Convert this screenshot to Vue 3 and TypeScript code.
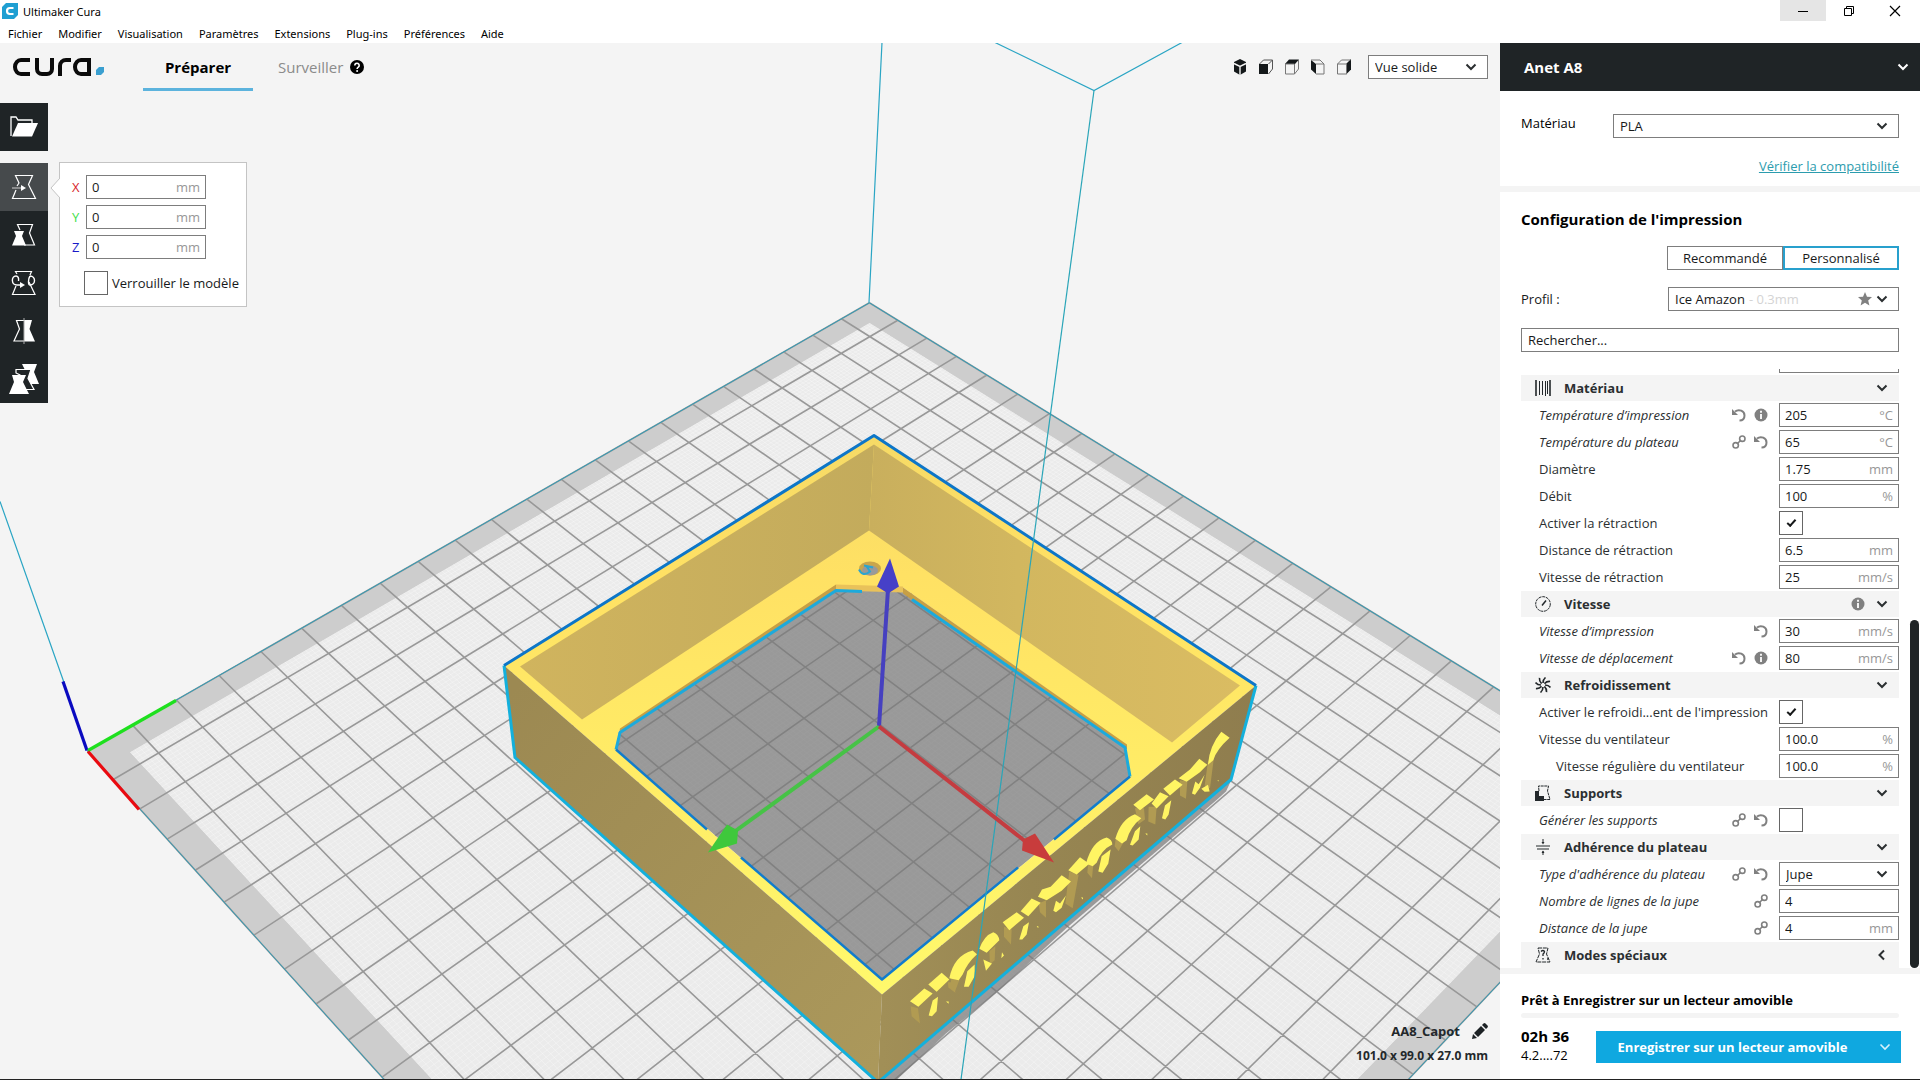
<script setup lang="ts">
import { ref } from 'vue'

type IconName = 'link' | 'undo' | 'info'

interface Row {
  kind: 'header' | 'field' | 'check' | 'select' | 'cut'
  label: string
  icon?: string
  value?: string
  unit?: string
  checked?: boolean
  italic?: boolean
  nested?: boolean
  closed?: boolean
  marks?: IconName[]
}

const menus = ['Fichier', 'Modifier', 'Visualisation', 'Paramètres', 'Extensions', 'Plug-ins', 'Préférences', 'Aide']

const rows = ref<Row[]>([
  { kind: 'cut', label: '' },
  { kind: 'header', label: 'Matériau', icon: 'material' },
  { kind: 'field', label: 'Température d’impression', value: '205', unit: '°C', italic: true, marks: ['undo', 'info'] },
  { kind: 'field', label: 'Température du plateau', value: '65', unit: '°C', italic: true, marks: ['link', 'undo'] },
  { kind: 'field', label: 'Diamètre', value: '1.75', unit: 'mm' },
  { kind: 'field', label: 'Débit', value: '100', unit: '%' },
  { kind: 'check', label: 'Activer la rétraction', checked: true },
  { kind: 'field', label: 'Distance de rétraction', value: '6.5', unit: 'mm' },
  { kind: 'field', label: 'Vitesse de rétraction', value: '25', unit: 'mm/s' },
  { kind: 'header', label: 'Vitesse', icon: 'speed', marks: ['info'] },
  { kind: 'field', label: 'Vitesse d’impression', value: '30', unit: 'mm/s', italic: true, marks: ['undo'] },
  { kind: 'field', label: 'Vitesse de déplacement', value: '80', unit: 'mm/s', italic: true, marks: ['undo', 'info'] },
  { kind: 'header', label: 'Refroidissement', icon: 'fan' },
  { kind: 'check', label: "Activer le refroidi...ent de l'impression", checked: true },
  { kind: 'field', label: 'Vitesse du ventilateur', value: '100.0', unit: '%' },
  { kind: 'field', label: 'Vitesse régulière du ventilateur', value: '100.0', unit: '%', nested: true },
  { kind: 'header', label: 'Supports', icon: 'support' },
  { kind: 'check', label: 'Générer les supports', checked: false, italic: true, marks: ['link', 'undo'] },
  { kind: 'header', label: 'Adhérence du plateau', icon: 'adhesion' },
  { kind: 'select', label: "Type d'adhérence du plateau", value: 'Jupe', italic: true, marks: ['link', 'undo'] },
  { kind: 'field', label: 'Nombre de lignes de la jupe', value: '4', unit: '', italic: true, marks: ['link'] },
  { kind: 'field', label: 'Distance de la jupe', value: '4', unit: 'mm', italic: true, marks: ['link'] },
  { kind: 'header', label: 'Modes spéciaux', icon: 'special', closed: true },
])

const axes = ref([
  { name: 'X', color: '#d8262c', value: '0' },
  { name: 'Y', color: '#3fe04a', value: '0' },
  { name: 'Z', color: '#1a1ac8', value: '0' },
])
const locked = ref(false)
const search = ref('')

/* Projects a point of the build plate (centimetres, 22 x 22) to the view. */
function project(a: number, b: number): string {
  const w = 1 + 0.01283 * a - 0.0135 * b
  const x = (87.5 + 46.695 * a + 24.3 * b) / w
  const y = (751.4 - 16.477 * a + 18.08 * b) / w
  return `${x.toFixed(1)} ${y.toFixed(1)}`
}

function gridPath(step: number): string {
  let d = ''
  for (let i = 0; i <= 22 / step; i++) {
    const t = i * step
    d += `M${project(t, 0)}L${project(t, 22)}M${project(0, t)}L${project(22, t)}`
  }
  return d
}

function squarePath(inset: number): string {
  const lo = inset
  const hi = 22 - inset
  return `M${project(lo, lo)}L${project(hi, lo)}L${project(hi, hi)}L${project(lo, hi)}Z`
}

const plate = squarePath(0)
const area = squarePath(0.6)
const grid = gridPath(1)
const fineGrid = gridPath(0.1)
</script>

<template>
  <div class="app">
    <header class="titlebar">
      <svg class="app-icon" width="16" height="16" viewBox="0 0 16 16">
        <path d="M4 0h12v12l-4 4H0V4z" fill="#1f9fd2" />
        <path d="M11.500 5H8a3 3 0 0 0 0 6h3.500" fill="none" stroke="#fff" stroke-width="2.200" />
      </svg>
      <span class="app-name">Ultimaker Cura</span>
      <div class="window-buttons">
        <button class="wb active" aria-label="Réduire">
          <svg width="12" height="12" viewBox="0 0 12 12"><path d="M1 6.500h10" stroke="#000" /></svg>
        </button>
        <button class="wb" aria-label="Restaurer">
          <svg width="12" height="12" viewBox="0 0 12 12"><path d="M1.500 3.500h7v7h-7zM3.500 3.500v-2h7v7h-2" fill="none" stroke="#000" /></svg>
        </button>
        <button class="wb" aria-label="Fermer">
          <svg width="12" height="12" viewBox="0 0 12 12"><path d="M1 1l10 10M11 1L1 11" stroke="#000" stroke-width="1.200" /></svg>
        </button>
      </div>
    </header>
    <nav class="menubar">
      <button v-for="m in menus" :key="m">{{ m }}</button>
    </nav>

    <div class="body">
      <main class="stage">
        <svg class="scene" viewBox="0 43 1500 1037" preserveAspectRatio="xMidYMid slice">
          <defs>
            <linearGradient id="rim" x1="0" y1="436" x2="0" y2="995" gradientUnits="userSpaceOnUse">
              <stop offset="0" stop-color="#f6da66" /><stop offset=".25" stop-color="#ffe164" />
              <stop offset=".6" stop-color="#ffec66" /><stop offset="1" stop-color="#fff96c" />
            </linearGradient>
            <linearGradient id="wallL" x1="520" y1="0" x2="874" y2="0" gradientUnits="userSpaceOnUse">
              <stop offset="0" stop-color="#d0b45e" /><stop offset="1" stop-color="#c3ab5c" />
            </linearGradient>
            <linearGradient id="wallR" x1="870" y1="0" x2="1240" y2="0" gradientUnits="userSpaceOnUse">
              <stop offset="0" stop-color="#c9af5d" /><stop offset=".4" stop-color="#d2b75f" /><stop offset="1" stop-color="#dabc62" />
            </linearGradient>
            <linearGradient id="outL" x1="504" y1="700" x2="882" y2="1060" gradientUnits="userSpaceOnUse">
              <stop offset="0" stop-color="#9c8952" /><stop offset="1" stop-color="#ab985b" />
            </linearGradient>
            <linearGradient id="outR" x1="882" y1="0" x2="1256" y2="0" gradientUnits="userSpaceOnUse">
              <stop offset="0" stop-color="#a18f57" /><stop offset=".4" stop-color="#978652" /><stop offset="1" stop-color="#8f7d4e" />
            </linearGradient>
            <clipPath id="printable"><path :d="area" /></clipPath>
          </defs>

          <path :d="plate" fill="#cdcdcd" />
          <path :d="area" fill="#ebebeb" />
          <path :d="fineGrid" fill="none" stroke="#fff" stroke-width="1" opacity=".3" clip-path="url(#printable)" />
          <path :d="grid" fill="none" stroke="#989898" stroke-width="1.600" />
          <path :d="plate" fill="none" stroke="#2f9db8" stroke-width="1" />

          <g fill="#787878" fill-opacity=".71">
            <path d="M616 750L620 732L836 590L902 591L1125 748L1130 777L882 981Z" />
            <path d="M1232 779L1226 792L1216 801L1066 929L1000 990L946 1034L897 1080H878Z" />
          </g>

          <g fill="none" stroke="#2aa5c4" stroke-width="1.200">
            <path d="M882 43L869 303M995 43L1094 91L1182 43M0 502L64 683" />
          </g>
          <g fill="none" stroke-width="3.200">
            <path d="M63 682L87 751" stroke="#0a0ac0" />
            <path d="M88 751L176 701" stroke="#1ee01e" />
            <path d="M88 752L139 810" stroke="#ea0a10" />
          </g>

          <path fill-rule="evenodd" fill="url(#rim)" d="M874 436L504 666L882 995L1256 686ZM616 750L619 731L836 587L903 588L1126 745L1130 777L882 981Z" />
          <path d="M874 445L520 667L582 720L869 531Z" fill="url(#wallL)" />
          <path d="M874 445L1240 686L1172 743L869 531Z" fill="url(#wallR)" />
          <path d="M619 733L620 729L836 585L838 590L620 734ZM903 588L1127 745V750L903 594Z" fill="#c79f45" />
          <path d="M836 585L903 587V593L836 591Z" fill="#e9c25a" />
          <path d="M504 666L882 995L878 1083L515 758Z" fill="url(#outL)" />
          <path d="M882 995L1256 686L1231 780L878 1083Z" fill="url(#outR)" />

          <ellipse cx="870" cy="569" rx="11" ry="7" fill="#c9a64c" />
          <ellipse cx="870" cy="571" rx="8" ry="5" fill="#999" />
          <path d="M859 570Q863 578 870 572L866 566M864 566l9 2" fill="none" stroke="#2aa5d0" stroke-width="2" />

          <g fill="none" stroke-linejoin="round">
            <path d="M504 666L515 758L878 1083L1231 780L1256 686" stroke="#14b0dc" stroke-width="3" />
            <path d="M504 666L874 436L1256 686" stroke="#0d76c8" stroke-width="3" />
            <path d="M616 750L620 733L836 591L862 592M912 600L1125 748L1130 777" stroke="#1caadc" stroke-width="3" />
            <path d="M616 750L707 830M741 858L882 980L1018 868M1054 840L1130 777" stroke="#127ccc" stroke-width="2.500" />
          </g>

          <g transform="translate(880 700) scale(.3333)">
            <g fill="#b19b52">
              <path d="M92 920L114 926L120 972L95 950ZM204 848L222 848L226 880L205 864ZM214 832L240 836L225 876L212 862ZM328 755L346 740L344 782L330 795ZM372 682L395 690L393 735L372 712ZM476 612L498 602V655L480 638ZM568 516L596 526L578 626L556 612ZM625 490L640 496L636 536L622 520ZM708 412L732 425L716 455L704 440ZM765 326L792 326L795 360L775 374ZM806 322L830 322L826 375L805 366ZM900 242L922 246L918 298L900 288ZM984 186L1004 158L990 266L974 258Z" />
            </g>
            <g fill="#fff563">
              <path d="M90 905L133 867L158 882L115 922ZM146 948L158 903L174 892L170 935L156 950Z" />
              <path d="M145 855L185 820L208 840L170 877Z" />
              <path d="M208 836Q222 768 278 753L291 764Q262 790 248 825L236 842ZM252 862L262 815L284 795L284 830L266 862Z" />
              <path d="M298 748Q312 708 340 698Q356 704 358 722L320 760ZM310 780L336 792L318 814Z" />
              <path d="M368 668L410 638L432 655L388 692ZM418 720L430 680L447 668L440 705L427 720Z" />
              <path d="M422 635L455 597L482 610L445 650Z" />
              <path d="M474 592L486 570L512 562L545 527L573 546L545 574L500 602ZM520 634L528 604L540 612L558 588L545 625L528 638Z" />
              <path d="M565 512L600 473L628 493L590 525Z" />
              <path d="M618 492Q636 425 680 414Q697 420 697 435Q665 450 650 490L638 500ZM655 516L665 470L692 450L685 492L668 520Z" />
              <path d="M706 418Q722 360 765 344L784 356Q752 380 740 422L726 432ZM750 436L765 395L781 380L776 420L758 438Z" />
              <path d="M760 316L800 284L822 300L780 332ZM815 312L840 278L866 290L830 327ZM846 356L855 318L874 302L866 345L856 360Z" />
              <path d="M850 268L885 240L908 256L870 288Z" />
              <path d="M896 236L930 210L958 178L982 196L960 218L920 247ZM936 282L946 246L956 254L974 226L960 265L945 286Z" />
              <path d="M1024 97L1049 115Q1010 150 1000 182L984 196Q988 140 1024 97ZM964 268L984 256L989 276L974 277Z" />
              <path d="M366 758l6 10-8 8zM198 906h8v7zM470 680h5v6zM603 594h6v6zM796 402h6v6zM1012 242h4v4z" />
            </g>
          </g>

          <path d="M1094 91L961 1080" fill="none" stroke="#2aa5b8" stroke-width="1.200" />

          <g fill="none" stroke-width="4">
            <path d="M879 727L888 590" stroke="#4640c0" />
            <path d="M879 727L732 834" stroke="#46c346" />
            <path d="M879 727L1028 844" stroke="#c43c40" />
          </g>
          <path d="M890 559L899 587L888 594L877 587Z" fill="#4640c8" />
          <path d="M708 853L727 825L738 831L737 844Z" fill="#3fc83c" />
          <path d="M1054 863L1035 834L1023 840L1022 851Z" fill="#c83c3c" />
        </svg>

        <div class="stage-top">
          <svg class="logo" width="80" height="20" viewBox="0 0 80 20" fill="none" stroke="#0b0b0b" stroke-width="4" role="img" aria-label="cura.">
            <path d="M18 3H9a6 7 0 0 0 0 14H18M25 1V12a5 5 0 0 0 5 5H35a5 5 0 0 0 5-5V1M48 19V9a6 6 0 0 1 6-6H59M77 19V3H69a6 7 0 0 0 0 14H77" />
          </svg>
          <svg class="logo-dot" width="8" height="8" viewBox="0 0 8 8"><path d="M3 0h5v5l-3 3H0V3z" fill="#3a9fd0" /></svg>
          <nav class="tabs">
            <button class="tab current">Préparer</button>
            <button class="tab">Surveiller
              <svg width="14" height="14" viewBox="0 0 14 14"><circle cx="7" cy="7" r="7" fill="#000" /><path d="M4.800 5.400a2.200 2.200 0 1 1 3.500 1.800c-.8.600-1.200.9-1.200 1.800" fill="none" stroke="#fff" stroke-width="1.600" /><circle cx="7.100" cy="10.900" r="1" fill="#fff" /></svg>
            </button>
          </nav>
          <div class="views">
            <button aria-label="Vue 3D">
              <svg width="16" height="16" viewBox="0 0 16 16"><path d="M8 0l6 3v9.500L8 16l-6-3.500V3z" fill="#14181a" /><path d="M2 4.500l6 3 6-3M8 7.500V16" stroke="#f4f4f4" stroke-width="1.400" fill="none" /></svg>
            </button>
            <button aria-label="Vue de face">
              <svg width="16" height="16" viewBox="0 0 16 16"><path d="M1 5h9v10H1z" fill="#14181a" /><path d="M1.500 5l4-4h9l-4 4M14.500 1v9l-4 5" stroke="#555" fill="none" /></svg>
            </button>
            <button aria-label="Vue du dessus">
              <svg width="16" height="16" viewBox="0 0 16 16"><path d="M1 5l4-4.500h10L11 5z" fill="#14181a" /><path d="M1.500 5h9v10h-9zM14.500 1v9l-4 5" stroke="#777" fill="none" /></svg>
            </button>
            <button aria-label="Vue de gauche">
              <svg width="16" height="16" viewBox="0 0 16 16"><path d="M1 1l5 4v10l-5-4.500z" fill="#14181a" /><path d="M1 1h9l4 4v10H6M6 5h8" stroke="#777" fill="none" /></svg>
            </button>
            <button aria-label="Vue de droite">
              <svg width="16" height="16" viewBox="0 0 16 16"><path d="M15 0l-5 5v10.500l5-5z" fill="#14181a" /><path d="M1.500 5h9v10h-9zM1.500 5l4-4h9" stroke="#777" fill="none" /></svg>
            </button>
          </div>
          <div class="select">
            <select aria-label="Mode d’affichage"><option>Vue solide</option></select>
            <svg width="12" height="8" viewBox="0 0 12 8"><path d="M1.500 1.500L6 6l4.500-4.500" /></svg>
          </div>
        </div>

        <div class="tools-area">
          <div class="toolbar">
            <button class="tool open" aria-label="Ouvrir">
              <svg width="28" height="22" viewBox="0 0 28 22"><path d="M1 20V1h5l2 3h14v3" fill="none" stroke="#fff" stroke-width="1.300" /><path d="M8 7h20l-6 13.500H2z" fill="#fff" /></svg>
            </button>
            <button class="tool selected" aria-label="Déplacer">
              <svg width="28" height="28" viewBox="0 0 28 28"><path d="M3 15M7 13L9 10L5.500 2.500h17l-4 9 7 14H2.500L6 17" fill="none" stroke="#fff" stroke-width="1.200" /><path d="M2 15h9" stroke="#bbb" stroke-width="1.200" /><path d="M11 12l5 3-5 3z" fill="#fff" /></svg>
            </button>
            <button class="tool" aria-label="Mettre à l’échelle">
              <svg width="28" height="28" viewBox="0 0 28 28"><path d="M10 9L7.500 3.500h15l-3 8.500 5 12H14" fill="none" stroke="#fff" stroke-width="1.200" /><path d="M4 10h10l-2 5 4 9.500H2l4-9.500z" fill="#fff" /></svg>
            </button>
            <button class="tool" aria-label="Tourner">
              <svg width="28" height="28" viewBox="0 0 28 28"><path d="M7 5L5.500 2.500h16L20 6M19 13l6 12.500H2.500L6 17" fill="none" stroke="#fff" stroke-width="1.200" /><path d="M8.500 12C9 9 8 7 6 7c-5 0-5 9 1 9l4 0M20 7c6 0 6 9 0 9-2 0-2-6 0-9" fill="none" stroke="#fff" stroke-width="1.400" /><path d="M10 13l5 3-5 3z" fill="#fff" /></svg>
            </button>
            <button class="tool" aria-label="Miroir">
              <svg width="28" height="28" viewBox="0 0 28 28"><path d="M14 3.500H6.500l3 8.500-5.500 12h10" fill="none" stroke="#fff" stroke-width="1.200" /><path d="M14 3h8l-2.500 9L25 24.500H14z" fill="#fff" /><path d="M14 1v26" stroke="#aaa" /></svg>
            </button>
            <button class="tool" aria-label="Paramètres par modèle">
              <svg width="32" height="32" viewBox="0 0 32 32"><path d="M14 1h15l-3 8 5 12h-9l-5-14z" fill="#fff" /><path d="M8 10V6.500h15l-3 9 6 11H16L12 12z" fill="#1f2426" stroke="#fff" stroke-width="1.200" /><path d="M4 12h14l-3 7 6 12H1l5-12z" fill="#fff" /></svg>
            </button>
          </div>
          <section class="panel">
            <svg class="pointer" width="10" height="20" viewBox="0 0 10 20"><path d="M10 0L1 10l9 10" fill="#fff" stroke="#c4c4c4" /></svg>
            <div v-for="a in axes" :key="a.name" class="axis">
              <label :for="'axis-' + a.name" :style="{ color: a.color }">{{ a.name }}</label>
              <div class="field"><input :id="'axis-' + a.name" v-model="a.value" type="text" /><span>mm</span></div>
            </div>
            <div class="lock">
              <input id="lock" v-model="locked" type="checkbox" class="check" />
              <label for="lock">Verrouiller le modèle</label>
            </div>
          </section>
        </div>

        <div class="model-info">
          <button class="model-name">AA8_Capot
            <svg width="16" height="16" viewBox="0 0 16 16" fill="#1c2124"><path d="M0 16l1-5 4 4zM2 10L9 3l4 4-7 7zM10 2l1.500-1.500q1-.8 2 0l2 2q.8 1 0 2L14 6z" /></svg>
          </button>
          <p>101.0 x 99.0 x 27.0 mm</p>
        </div>
      </main>

      <aside class="sidebar">
        <button class="machine">Anet A8
          <svg width="12" height="8" viewBox="0 0 12 8"><path d="M1.500 1.500L6 6l4.500-4.500" fill="none" stroke="#fff" stroke-width="2" /></svg>
        </button>
        <section class="material">
          <div class="material-row">
            <label for="mat">Matériau</label>
            <div class="select">
              <select id="mat"><option>PLA</option></select>
              <svg width="12" height="8" viewBox="0 0 12 8"><path d="M1.500 1.500L6 6l4.500-4.500" /></svg>
            </div>
          </div>
          <a href="#">Vérifier la compatibilité</a>
        </section>
        <section class="config">
          <h2>Configuration de l'impression</h2>
          <div class="modes">
            <button>Recommandé</button>
            <button class="on">Personnalisé</button>
          </div>
          <div class="profile-row">
            <span>Profil :</span>
            <button class="profile">Ice Amazon <em>- 0.3mm</em>
              <svg class="star" width="14" height="14" viewBox="0 0 14 14"><path d="M7 0l2 4.700 5 .4-3.800 3.300 1.200 5L7 10.700l-4.400 2.700 1.200-5L0 5.100l5-.4z" fill="#808080" /></svg>
              <svg width="12" height="8" viewBox="0 0 12 8"><path d="M1.500 1.500L6 6l4.500-4.500" fill="none" stroke="#2b2f31" stroke-width="2" /></svg>
            </button>
          </div>
          <input v-model="search" class="search" type="text" placeholder="Rechercher..." aria-label="Rechercher" />
        </section>

        <div class="settings">
          <div class="list">
            <div v-for="(r, i) in rows" :key="i" class="row" :class="['row-' + r.kind, { italic: r.italic, nested: r.nested }]">
              <span v-if="r.kind === 'header'" class="cat-icon">
                <svg width="16" height="16" viewBox="0 0 16 16" fill="none" stroke="#23282b">
                  <g v-if="r.icon === 'material'"><path d="M1 0v16M15 0v16" stroke-width="1.600" /><path d="M4.500 1v14M7.500 1v14M10.500 1v15M12.500 1v13" /></g>
                  <g v-if="r.icon === 'speed'"><circle cx="8" cy="8" r="7.300" stroke-dasharray="3 .7" /><path d="M7 9.500l4-5" stroke-width="1.500" /></g>
                  <g v-if="r.icon === 'fan'" stroke-width="1.600"><path v-for="k in 8" :key="k" d="M8 6Q8 2.500 10.500 .5" :transform="`rotate(${k * 45} 8 8)`" /></g>
                  <g v-if="r.icon === 'support'"><path d="M4 6L3.500 1h10l-1 5 2.500 8.500H9" stroke-dasharray="3 .6" /><path d="M0 6h4v5h5v5H0z" fill="#23282b" stroke="none" /></g>
                  <g v-if="r.icon === 'adhesion'"><path d="M1 7h14M2 10h12M8 0v4M8 16v-4" /><path d="M6.500 3h3L8 5.500zM6.500 14h3L8 11.500z" fill="#23282b" stroke="none" /></g>
                  <g v-if="r.icon === 'special'"><path d="M3 1h10l-1.500 6L15 15H1l3.500-8z" stroke-dasharray="4 .8" /><path d="M6 4.500q2-2 3.500 0 0 1.500-1.500 2.500v2M8 11v1.500M12 12h1.500" stroke-width="1.300" /></g>
                </svg>
              </span>
              <label class="name" :for="r.kind === 'header' ? undefined : 'setting-' + i">{{ r.label }}</label>
              <span class="marks">
                <svg v-for="m in r.marks" :key="m" width="14" height="14" viewBox="0 0 14 14" fill="none" stroke="#808080">
                  <g v-if="m === 'link'" stroke-width="1.600"><circle cx="3.700" cy="10.300" r="2.700" /><circle cx="10.300" cy="3.700" r="2.700" /><path d="M5 9l4-4" /></g>
                  <g v-else-if="m === 'undo'"><path d="M3 3.500C7 .5 12.500 3 12.500 7.500c0 3-2 5-5 5" stroke-width="2" /><path d="M0 1v6h6z" fill="#808080" stroke="none" /></g>
                  <g v-else><circle cx="7" cy="7" r="6.500" fill="#808080" stroke="none" /><path d="M7 6v5M7 2.800v2" stroke="#fff" stroke-width="1.800" /></g>
                </svg>
              </span>
              <svg v-if="r.kind === 'header'" width="12" height="12" viewBox="0 0 12 12" fill="none" stroke="#2b2f31" stroke-width="2">
                <path :d="r.closed ? 'M8 1.500L3.500 6L8 10.500' : 'M1.500 3.500L6 8l4.500-4.500'" />
              </svg>
              <div v-else-if="r.kind === 'field'" class="field"><input :id="'setting-' + i" v-model="r.value" type="text" /><span>{{ r.unit }}</span></div>
              <div v-else-if="r.kind === 'cut'" class="field"><input :id="'setting-' + i" type="text" aria-label="Valeur" /></div>
              <div v-else-if="r.kind === 'check'" class="check-cell"><input :id="'setting-' + i" v-model="r.checked" type="checkbox" class="check" /></div>
              <div v-else class="select">
                <select :id="'setting-' + i"><option>{{ r.value }}</option></select>
                <svg width="12" height="8" viewBox="0 0 12 8"><path d="M1.500 1.500L6 6l4.500-4.500" /></svg>
              </div>
            </div>
          </div>
          <div class="track"><div class="thumb"></div></div>
        </div>

        <footer class="job">
          <p class="status">Prêt à Enregistrer sur un lecteur amovible</p>
          <div class="progress"></div>
          <div class="job-row">
            <div class="estimate"><strong>02h 36</strong><span>4.2....72</span></div>
            <div class="save">
              <button class="save-main">Enregistrer sur un lecteur amovible</button>
              <button class="save-more" aria-label="Autres sorties">
                <svg width="12" height="8" viewBox="0 0 12 8"><path d="M1.500 1.500L6 6l4.500-4.500" fill="none" stroke="#d8f2fc" stroke-width="1.600" /></svg>
              </button>
            </div>
          </div>
        </footer>
      </aside>
    </div>
  </div>
</template>

<style>
body { margin: 0; }
</style>

<style scoped>
.app {
  display: flex; flex-direction: column; min-height: 100vh; box-sizing: border-box;
  border-bottom: 2px solid #222; background: #fff; overflow: hidden;
  font-family: "Open Sans", "Noto Sans", sans-serif; font-size: 13px; line-height: 18px; color: #17191a;
}
.app *, .app *::before { box-sizing: border-box; }
button { font: inherit; color: inherit; background: none; border: 0; padding: 0; margin: 0; }
input, select { font: inherit; color: inherit; margin: 0; }
p, h2 { margin: 0; }
svg { display: block; flex: none; }

.titlebar { display: flex; height: 22px; font-family: "Noto Sans", sans-serif; font-size: 11px; }
.app-icon { margin: 3px 5px 0 2px; }
.app-name { line-height: 24px; color: #000; }
.window-buttons { display: flex; margin-left: auto; padding-right: 2px; }
.wb { width: 46px; height: 21px; display: flex; align-items: center; justify-content: center; }
.wb.active { background: #e5e5e5; }
.menubar { display: flex; gap: 16px; height: 21px; padding-left: 8px; font-family: "Noto Sans", sans-serif; font-size: 11px; color: #000; }
.menubar button { line-height: 24px; }

.body { display: flex; flex: 1; }
.stage { position: relative; flex: 1; min-width: 0; background: #f4f4f4; display: flex; flex-direction: column; }
.scene { position: absolute; inset: 0; width: 100%; height: 100%; }
.stage-top, .tools-area, .model-info { position: relative; }
.stage-top { display: flex; align-items: center; height: 48px; padding: 0 12px; }
.logo-dot { margin: 8px 0 0 4px; }
.tabs { display: flex; align-self: stretch; margin-left: 39px; }
.tab { display: flex; align-items: center; justify-content: center; width: 110px; font-size: 15px; color: #8b8b8b; border-bottom: 3px solid transparent; gap: 7px; white-space: nowrap; padding-top: 3px; }
.tab.current { font-weight: 700; color: #000; border-color: #5cb3dd; }
.tab:last-child { width: auto; margin-left: 25px; }
.views { display: flex; gap: 10px; margin-left: auto; margin-right: 16px; }

.select { position: relative; width: 120px; height: 24px; flex: none; }
.select select { appearance: none; width: 100%; height: 24px; border: 1px solid #7d7d7d; border-radius: 0; background: #fff; padding: 0 6px; line-height: 20px; }
.select svg { position: absolute; right: 11px; top: 8px; pointer-events: none; fill: none; stroke: #2b2f31; stroke-width: 2; }

.tools-area { display: flex; margin-top: 12px; }
.toolbar { width: 48px; display: flex; flex-direction: column; }
.tool { height: 48px; background: #1f2426; display: flex; align-items: center; justify-content: center; }
.tool.open { margin-bottom: 12px; }
.tool.selected { background: #464a4c; }
.panel { position: relative; align-self: flex-start; width: 188px; margin: 59px 0 0 11px; background: #fff; border: 1px solid #c4c4c4; padding: 12px 7px 11px 12px; display: flex; flex-direction: column; gap: 6px; }
.pointer { position: absolute; left: -10px; top: 15px; }
.axis { display: flex; align-items: center; gap: 6px; }
.axis label { width: 8px; }
.field { width: 120px; height: 24px; flex: none; display: flex; align-items: center; border: 1px solid #7d7d7d; background: #fff; }
.field input { flex: 1; min-width: 0; height: 20px; border: 0; padding: 0 0 0 5px; background: none; outline: 0; }
.field span { color: #979797; padding-right: 5px; }
.lock { display: flex; align-items: center; gap: 4px; margin: 6px 0 0 12px; white-space: nowrap; }
.check { appearance: none; width: 24px; height: 24px; flex: none; border: 1px solid #666; background: #fff; display: grid; place-items: center; }
.check:checked::before { content: ""; width: 9px; height: 5px; border: solid #17191a; border-width: 0 0 2px 2px; transform: rotate(-48deg) translate(1px, -1px); }

.model-info { margin-top: auto; display: flex; flex-direction: column; align-items: flex-end; gap: 6px; padding: 0 12px 14px 0; font-weight: 700; font-size: 12px; color: #23282b; }
.model-name { display: flex; align-items: center; gap: 12px; height: 20px; font-size: 13px; }

.sidebar { width: 420px; flex: none; display: flex; flex-direction: column; background: #fff; }
.machine { height: 48px; background: #1f2426; color: #fff; font-weight: 700; font-size: 15px; display: flex; align-items: center; justify-content: space-between; padding: 0 11px 0 24px; }
.material { height: 101px; padding: 23px 21px 0 21px; border-bottom: 6px solid #f4f4f4; display: flex; flex-direction: column; align-items: flex-end; gap: 19px; }
.material-row { display: flex; justify-content: space-between; width: 100%; }
.material-row .select { width: 286px; }
.material-row label { line-height: 18px; color: #000; }
.material a { color: #2c9cae; line-height: 18px; }
.config { padding: 16px 21px 0; display: flex; flex-direction: column; }
.config h2 { font-size: 15px; line-height: 22px; font-weight: 700; color: #000; }
.modes { display: flex; align-self: flex-end; margin-top: 16px; }
.modes button { width: 116px; height: 24px; border: 1px solid #7d7d7d; line-height: 20px; }
.modes button.on { border: 2px solid #28a0cd; }
.profile-row { display: flex; align-items: center; justify-content: space-between; margin-top: 17px; }
.profile { display: flex; align-items: center; width: 231px; height: 24px; border: 1px solid #7d7d7d; padding: 0 10px 0 6px; gap: 4px; }
.profile em { font-style: normal; color: #d4d4d4; }
.profile .star { margin-left: auto; }
.search { height: 24px; margin-top: 17px; border: 1px solid #7d7d7d; padding: 0 6px; border-radius: 0; outline: 0; }
.search::placeholder { color: #17191a; opacity: 1; }

.settings { display: flex; margin-top: 17px; border-bottom: 6px solid #f4f4f4; }
.list { flex: 1; display: flex; flex-direction: column; gap: 1px; overflow: hidden; margin-left: 21px; }
.row { display: flex; align-items: center; height: 26px; padding-left: 18px; flex: none; }
.row-cut { margin-top: -21px; }
.row-header { background: #f4f4f4; padding-left: 14px; padding-right: 11px; font-weight: 700; }
.italic .name { font-style: italic; }
.nested { padding-left: 35px; }
.cat-icon { width: 29px; }
.name { white-space: nowrap; color: #2b2f31; }
.marks { display: flex; gap: 8px; margin-left: auto; margin-right: 11px; }
.row-check .marks:empty { margin-right: 0; }
.check-cell { width: 120px; flex: none; display: flex; }
.track { width: 21px; display: flex; align-items: flex-end; padding-left: 11px; }
.thumb { width: 9px; height: 348px; border-radius: 5px; background: #1f2426; }

.job { padding: 17px 19px 15px 21px; display: flex; flex-direction: column; }
.status { font-weight: 700; color: #000; }
.progress { height: 5px; margin: 4px 2px 13px 0; background: #f4f4f4; border-radius: 3px; }
.job-row { display: flex; justify-content: space-between; }
.estimate { display: flex; flex-direction: column; color: #000; }
.estimate strong { font-size: 15px; line-height: 20px; margin-top: -5px; }
.save { display: flex; width: 305px; height: 32px; background: #0fa8e0; color: #fff; }
.save-main { flex: 1; font-weight: 700; }
.save-more { width: 32px; display: flex; align-items: center; justify-content: center; }
</style>
